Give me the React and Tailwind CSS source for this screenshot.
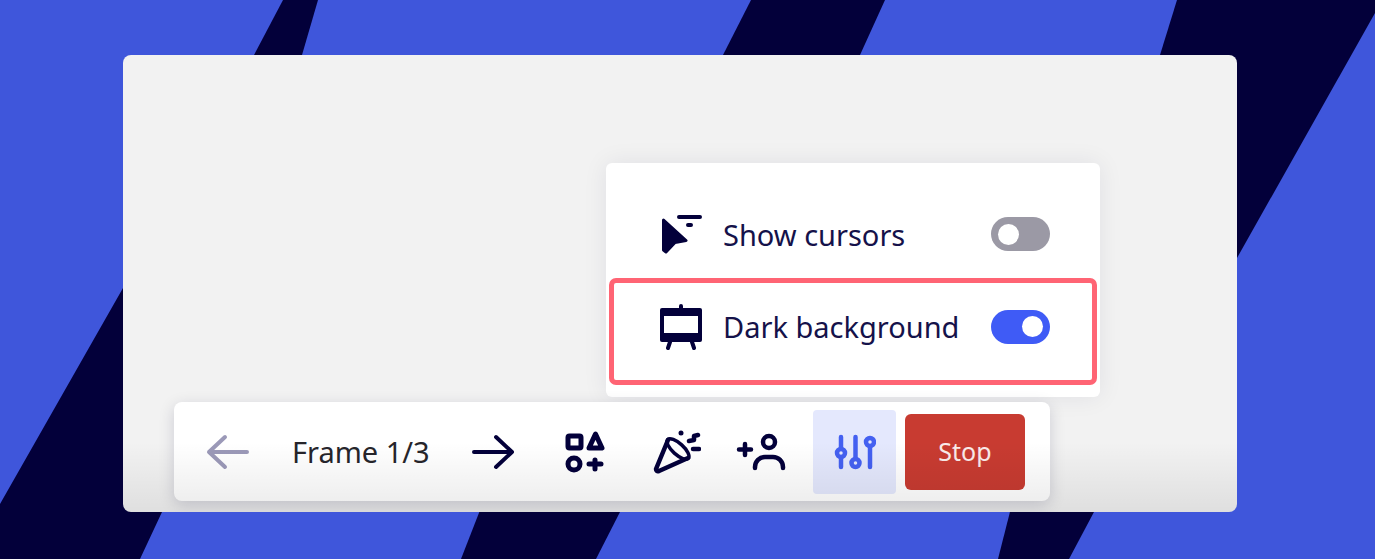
import React from 'react';

const navy = '#03003a';

const Background = () => (
  <svg className="absolute inset-0 w-full h-full" viewBox="0 0 1375 559">
    <rect width="1375" height="559" fill="#3f56db" />
    <polygon points="283,0 318,0 302,55 254,55" fill={navy} />
    <polygon points="751,0 885,0 860,55 723,55" fill={navy} />
    <polygon points="1177,0 1375,0 1375,13 1237,258 1160,258 1160,55" fill={navy} />
    <polygon points="123,288 300,288 300,512 162,512 140,559 0,559 0,504" fill={navy} />
    <polygon points="484,500 620,500 620,512 596,559 461,559" fill={navy} />
    <polygon points="1013,500 1094,500 1094,512 1069,559 998,559" fill={navy} />
  </svg>
);

const CursorIcon = () => (
  <svg width="44" height="40" viewBox="0 0 44 40" fill={navy} className="block">
    <path d="M3.500 6 L26 26.500 L15 28.500 L6 38 L3.500 36 Z" stroke={navy} strokeWidth="3" strokeLinejoin="round" />
    <path d="M19 3 H40 M28 11 H31" fill="none" stroke={navy} strokeWidth="4" strokeLinecap="round" />
  </svg>
);

const EaselIcon = () => (
  <svg width="42" height="46" viewBox="0 0 42 46" className="block">
    <path d="M21 2 V6 M10 38 L8 44 M32 38 L34 44" stroke={navy} strokeWidth="4" strokeLinecap="round" />
    <rect x="0" y="4" width="42" height="34" rx="2" fill={navy} />
    <rect x="4" y="12" width="34" height="17" fill="#fff" />
  </svg>
);

const Toggle = ({ on }) => (
  <div className={`w-[59px] h-[34px] rounded-full flex items-center px-[7px] ${on ? 'bg-[#3f5bf6] justify-end' : 'bg-[#9b99a5] justify-start'}`}>
    <div className="w-[21px] h-[21px] rounded-full bg-white" />
  </div>
);

const ArrowIcon = ({ flip, color }) => (
  <svg width="44" height="36" viewBox="0 0 44 36" fill="none" stroke={color} strokeWidth="4" strokeLinecap="round" strokeLinejoin="round" className={flip ? 'rotate-180' : ''}>
    <path d="M2 18 H40 M24 3 L40 18 L24 33" />
  </svg>
);

const ShapesIcon = () => (
  <svg width="40" height="42" viewBox="0 0 40 42" fill="none" stroke={navy} strokeWidth="5" strokeLinejoin="round" strokeLinecap="round">
    <rect x="3" y="5" width="13" height="12" rx="1.500" />
    <path d="M30.500 3 L37 17 H24 Z" />
    <circle cx="9" cy="33" r="6" />
    <path d="M30 29 V38 M24 33 H36" />
  </svg>
);

const PartyIcon = () => (
  <svg width="48" height="44" viewBox="0 0 48 44" fill="none" stroke={navy} strokeWidth="4.500" strokeLinejoin="round" strokeLinecap="round">
    <path d="M15 10 L3 39 Q3 42 6 41 L35 28" />
    <ellipse cx="25" cy="19" rx="14" ry="5.500" transform="rotate(42 25 19)" strokeWidth="3.500" />
    <path d="M36 11 L41 10 L41 6 L45 5 M40 19 H46" />
    <circle cx="28" cy="3" r="2.500" fill={navy} stroke="none" />
  </svg>
);

const AddUserIcon = () => (
  <svg width="50" height="38" viewBox="0 0 50 38" fill="none" stroke={navy} strokeWidth="4.500" strokeLinecap="round">
    <circle cx="33" cy="9" r="6" />
    <path d="M19 35 V34 A10 10 0 0 1 29 24 H37 A10 10 0 0 1 47 34 V35" />
    <path d="M9 11 V22 M3 16.500 H15" />
  </svg>
);

const SlidersIcon = () => (
  <svg width="42" height="36" viewBox="0 0 42 36" fill="none" stroke="#4460f1" strokeWidth="4.500" strokeLinecap="round">
    <path d="M7 3 V14 M7 24 V33 M21.500 3 V24 M36 13 V33" />
    <circle cx="7" cy="19" r="4" />
    <circle cx="21.500" cy="29" r="4" />
    <circle cx="36" cy="8" r="4" />
  </svg>
);

const App = () => {
  return (
    <div className="relative h-[559px] w-[1375px] overflow-hidden pt-[55px] pl-[123px] font-['Noto_Sans','Open_Sans',sans-serif]">
      <Background />
      <div className="relative w-[1114px] h-[457px] rounded-[8px] bg-[#f2f2f2] pt-[108px] pl-[51px] overflow-hidden">
        {/* settings popover */}
        <div className="ml-[432px] w-[494px] h-[234px] bg-white rounded-[6px] shadow-[0_0_24px_rgba(3,0,58,0.08)] pt-[32px] px-[3px]">
          <div className="h-[78px] flex items-center pl-[51px] pr-[47px]">
            <div className="w-[63px]"><CursorIcon /></div>
            <span className="text-[29px] text-[#15124a] flex-1 leading-none">Show cursors</span>
            <Toggle />
          </div>
          <div className="mt-[5px] h-[107px] border-[5px] border-[#ff6474] rounded-[7px] flex items-center pl-[46px] pr-[42px] pb-[10px]">
            <div className="w-[63px]"><EaselIcon /></div>
            <span className="text-[29px] text-[#15124a] flex-1 leading-none">Dark background</span>
            <Toggle on />
          </div>
        </div>
        {/* bottom toolbar */}
        <div className="mt-[5px] w-[876px] h-[99px] bg-white rounded-[8px] shadow-[0_4px_16px_rgba(3,0,58,0.16)] flex items-center pl-[31px]">
          <ArrowIcon flip color="#9b99b8" />
          <span className="ml-[43px] w-[180px] text-[29px] text-[#26252b] leading-none">Frame 1/3</span>
          <ArrowIcon color={navy} />
          <div className="ml-[49px]"><ShapesIcon /></div>
          <div className="ml-[48px]"><PartyIcon /></div>
          <div className="ml-[35px]"><AddUserIcon /></div>
          <div className="ml-[27px] w-[83px] h-[84px] rounded-[4px] bg-[#e4e8fd] flex items-center justify-center"><SlidersIcon /></div>
          <button className="ml-[9px] w-[120px] h-[76px] rounded-[6px] bg-[#c83b31] text-white/90 text-[25px]">Stop</button>
        </div>
        {/* fade over the bottom of the frame */}
        <div className="absolute left-0 right-0 bottom-0 h-[70px] bg-gradient-to-b from-transparent to-[rgba(0,0,0,0.08)] pointer-events-none" />
      </div>
    </div>
  );
};

export default App;
